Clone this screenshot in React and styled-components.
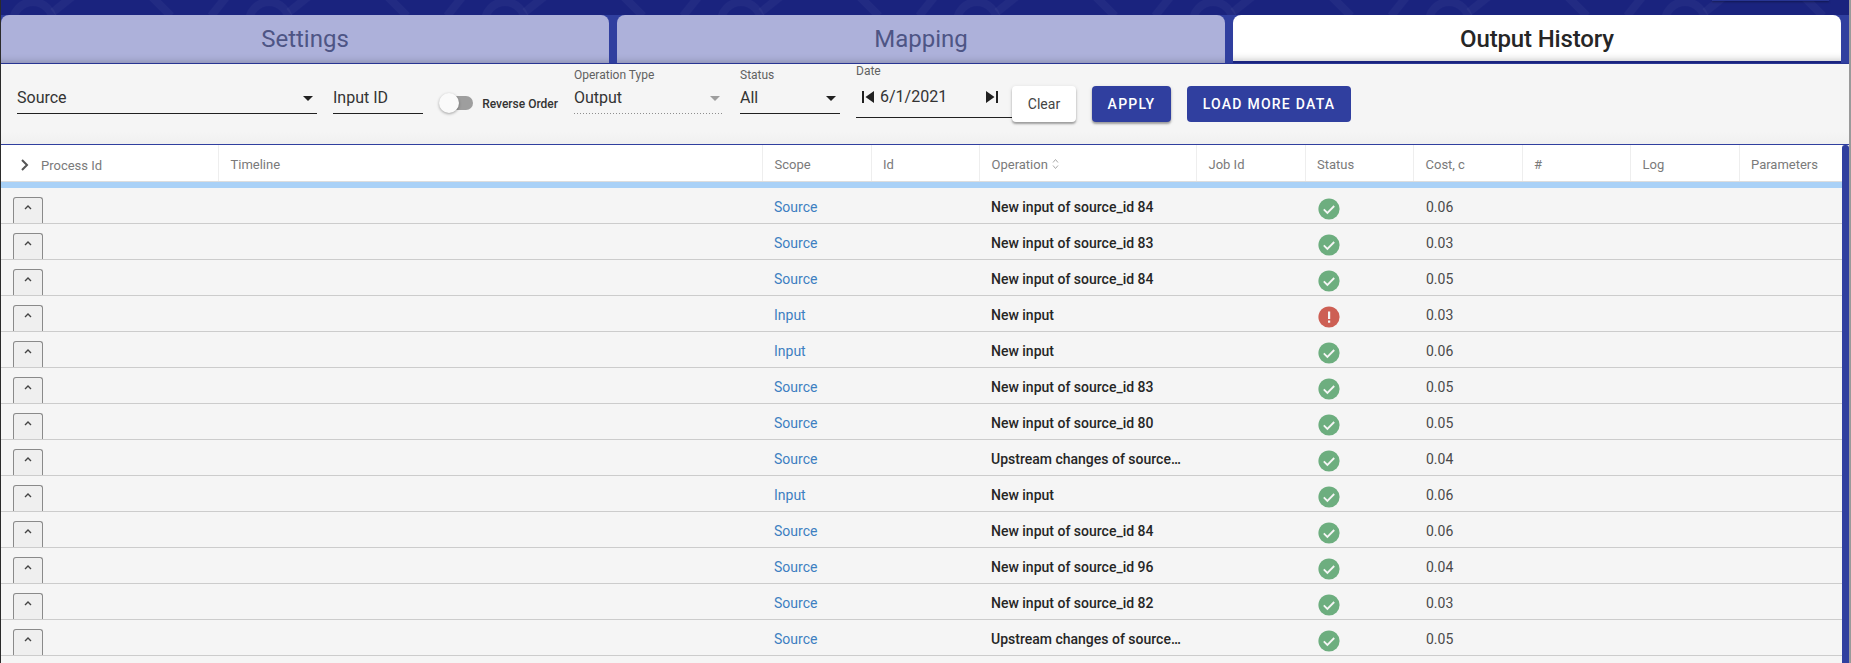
import React from "react";
import styled, { createGlobalStyle } from "styled-components";

const GRID_COLUMNS =
  "217px 544px 108.5px 108.5px 217px 108.5px 108.5px 108.5px 108.5px 108.5px 103.5px";

const GlobalStyle = createGlobalStyle`
  html, body {
    margin: 0;
    height: 663px;
    overflow: hidden;
    background: #f5f5f5;
    font-family: Roboto, "Liberation Sans", sans-serif;
  }
  * {
    box-sizing: border-box;
  }
`;

const Page = styled.div`
  border-left: 1px solid #2b2b2b;
  border-right: 2px solid #9a9a9a;
  display: flex;
  flex-direction: column;
  height: 663px;
  overflow: hidden;
  width: 1851px;
`;

const TopBand = styled.div`
  background: #1a237e;
  display: flex;
  flex: none;
  height: 15px;
  justify-content: flex-end;
  overflow: hidden;
  padding-right: 20px;
  position: relative;
`;

const BandPattern = styled.svg`
  height: 15px;
  left: 0;
  position: absolute;
  top: 0;
  width: 100%;
`;

const BandButton = styled.div`
  background: #283593;
  box-shadow: 0 1px 2px rgba(0, 0, 0, 0.5);
  height: 1px;
  position: relative;
  width: 117px;
`;

const TabRow = styled.div`
  background: #303f9f;
  border-bottom: 1px solid #283593;
  display: flex;
  flex: none;
  gap: 8px;
  height: 49px;
  padding-right: 8px;
`;

const Tab = styled.div`
  align-items: center;
  background: ${props => (props.$active ? "#fff" : "#adb1da")};
  border-bottom: ${props => (props.$active ? "2px solid #1a237e" : "none")};
  border-radius: 8px 8px 0 0;
  box-shadow: inset 0 -8px 8px -8px rgba(0, 0, 0, 0.28);
  color: ${props => (props.$active ? "#262626" : "#4e5585")};
  display: flex;
  flex: 1;
  font-size: 24px;
  font-weight: ${props => (props.$active ? 500 : 400)};
  height: 48px;
  justify-content: center;
  letter-spacing: ${props => (props.$active ? "-0.15px" : "0")};
  padding-top: ${props => (props.$active ? "1px" : "0")};
`;

const FilterBar = styled.div`
  align-items: flex-start;
  background: linear-gradient(#f5f5f5 85%, #f0f0f0);
  border-bottom: 1px solid #303f9f;
  display: flex;
  flex: none;
  gap: 16px;
  height: 81px;
  padding: 4px 0 0 16px;
`;

const Field = styled.div`
  display: flex;
  flex: none;
  flex-direction: column;
  height: ${props => (props.$date ? "54px" : "46px")};
  justify-content: flex-end;
  margin-right: ${props => (props.$date ? "-16px" : "0")};
  margin-top: ${props => (props.$date ? "-4px" : "0")};
  width: ${props => props.$width}px;
`;

const FieldLabel = styled.label`
  color: #616161;
  font-size: 12px;
  height: ${props => (props.$date ? "24px" : "16px")};
  line-height: 14px;
  margin-bottom: auto;
`;

const Control = styled.div`
  align-items: center;
  background-image: ${props =>
    props.$disabled
      ? "linear-gradient(to right, rgba(0, 0, 0, 0.42) 33%, transparent 0%)"
      : "none"};
  background-position: bottom left;
  background-repeat: repeat-x;
  background-size: 3px 1px;
  border-bottom: ${props => (props.$disabled ? "none" : "1px solid #212121")};
  color: #333;
  display: flex;
  font-size: 16px;
  height: ${props => (props.$date ? "33px" : "30px")};
  line-height: 24px;
  padding-bottom: ${props => (props.$date ? "8px" : "2px")};
  padding-right: ${props => (props.$date ? "8px" : "0")};
`;

const ControlText = styled.span`
  flex: 1;
`;

const ControlIcon = styled.svg`
  fill: ${props => props.$color || "#212121"};
  flex: none;
  height: 24px;
  margin-right: ${props => props.$pull || 0}px;
  width: 24px;
`;

const SwitchField = styled.div`
  align-items: center;
  display: flex;
  flex: none;
  gap: 9px;
  margin-top: 26px;
  width: 119px;
`;

const SwitchTrack = styled.div`
  background: #9e9e9e;
  border-radius: 7px;
  height: 14px;
  margin-left: 2px;
  position: relative;
  width: 34px;
`;

const SwitchThumb = styled.div`
  background: #fafafa;
  border-radius: 50%;
  box-shadow: 0 1px 3px rgba(0, 0, 0, 0.35);
  height: 20px;
  left: -2px;
  position: absolute;
  top: -3px;
  width: 20px;
`;

const SwitchLabel = styled.span`
  color: #333;
  font-size: 12px;
  font-weight: 500;
  padding-top: 3px;
  white-space: nowrap;
`;

const ActionButton = styled.button`
  background: ${props => (props.$primary ? "#303f9f" : "#fff")};
  border: none;
  border-radius: 4px;
  box-shadow: ${props =>
    props.$flat ? "none" : "0 2px 2px rgba(0, 0, 0, 0.3), 0 1px 4px rgba(0, 0, 0, 0.12)"};
  color: ${props => (props.$primary ? "#fff" : "#444")};
  flex: none;
  font-family: inherit;
  font-size: 14px;
  font-weight: ${props => (props.$primary ? 500 : 400)};
  height: 36px;
  letter-spacing: ${props => (props.$primary ? "1.25px" : "0")};
  margin-top: 18px;
  padding: 0;
  width: ${props => props.$width}px;
`;

const TableArea = styled.div`
  display: flex;
  flex: 1;
  min-height: 0;
`;

const Table = styled.div`
  flex: 1;
  min-width: 0;
`;

const Scrollbar = styled.div`
  background: #303f9f;
  border-radius: 3px 3px 0 0;
  flex: none;
  width: 7px;
`;

const HeaderRow = styled.div`
  background: #fff;
  border-bottom: 1px solid #ddd;
  display: grid;
  grid-template-columns: ${GRID_COLUMNS};
  height: 37px;
`;

const HeaderCell = styled.div`
  align-items: center;
  border-left: ${props => (props.$first ? "none" : "1px solid #eee")};
  color: #7a7a7a;
  display: flex;
  font-size: 13px;
  gap: ${props => (props.$first ? "11px" : "4px")};
  padding: ${props => (props.$first ? "4px 0 0 19px" : "2px 0 0 11.5px")};
`;

const SelectionStrip = styled.div`
  background: #a9d1f7;
  height: 6px;
`;

const Row = styled.div`
  border-bottom: 1px solid #ccc;
  display: grid;
  grid-template-columns: ${GRID_COLUMNS};
  height: 36px;
  overflow: hidden;
`;

const Cell = styled.div`
  align-items: center;
  color: ${props => props.$color || "#4a4a4a"};
  display: flex;
  font-size: 14px;
  font-weight: ${props => props.$weight || 400};
  padding: 2px 0 0 ${props => props.$inset || 12}px;
  white-space: nowrap;
`;

const ExpandButton = styled.button`
  align-items: center;
  background: #efefef;
  border: 1px solid #8a8a8a;
  border-bottom: none;
  border-radius: 3px 3px 0 0;
  display: flex;
  height: 27px;
  justify-content: center;
  margin: 9px 0 0 12px;
  padding: 0 0 7px;
  width: 30px;
`;

const StatusIcon = styled.svg`
  align-self: flex-start;
  height: 24px;
  margin: 9px 0 0 12px;
  width: 24px;
`;

const rows = [
  ["Source", "New input of source_id 84", "ok", "0.06"],
  ["Source", "New input of source_id 83", "ok", "0.03"],
  ["Source", "New input of source_id 84", "ok", "0.05"],
  ["Input", "New input", "error", "0.03"],
  ["Input", "New input", "ok", "0.06"],
  ["Source", "New input of source_id 83", "ok", "0.05"],
  ["Source", "New input of source_id 80", "ok", "0.05"],
  ["Source", "Upstream changes of source…", "ok", "0.04"],
  ["Input", "New input", "ok", "0.06"],
  ["Source", "New input of source_id 84", "ok", "0.06"],
  ["Source", "New input of source_id 96", "ok", "0.04"],
  ["Source", "New input of source_id 82", "ok", "0.03"],
  ["Source", "Upstream changes of source…", "ok", "0.05"],
];

const headers = ["Timeline", "Scope", "Id", "Operation", "Job Id", "Status", "Cost, c", "#", "Log", "Parameters"];

const ArrowDown = ({ color }) => (
  <ControlIcon viewBox="0 0 24 24" $color={color} $pull={-3}>
    <path d="M7 10l5 5 5-5z" />
  </ControlIcon>
);

const Status = ({ state }) => (
  <StatusIcon viewBox="0 0 24 24">
    {state === "ok" ? (
      <>
        <circle cx="12" cy="12" r="10.6" fill="#6dae7f" />
        <path d="M6.800 12.400l3.600 3.600L17.200 9" fill="none" stroke="#f5f5f5" strokeWidth="1.8" />
      </>
    ) : (
      <>
        <circle cx="12" cy="12" r="10.6" fill="#cd5f54" />
        <path d="M11 6.500h2.200v7.500H11zM11 15.500h2.200v2.200H11z" fill="#f5f5f5" />
      </>
    )}
  </StatusIcon>
);

const App = () => {
  return (
    <Page>
      <GlobalStyle />
      <TopBand>
        <BandPattern>
          <defs>
            <pattern id="band" width="236" height="15" patternUnits="userSpaceOnUse">
              <circle cx="32" cy="22" r="20" fill="none" stroke="#fff" strokeOpacity="0.035" strokeWidth="8" />
              <path d="M52 12L72 -4M150 -4L170 16M210 16L226 -4" stroke="#fff" strokeOpacity="0.035" strokeWidth="8" />
            </pattern>
          </defs>
          <rect width="100%" height="15" fill="url(#band)" />
        </BandPattern>
        <BandButton />
      </TopBand>

      <TabRow>
        <Tab>Settings</Tab>
        <Tab>Mapping</Tab>
        <Tab $active>Output History</Tab>
      </TabRow>

      <FilterBar>
        <Field $width={300}>
          <Control>
            <ControlText>Source</ControlText>
            <ArrowDown />
          </Control>
        </Field>
        <Field $width={90}>
          <Control>
            <ControlText>Input ID</ControlText>
          </Control>
        </Field>
        <SwitchField>
          <SwitchTrack>
            <SwitchThumb />
          </SwitchTrack>
          <SwitchLabel>Reverse Order</SwitchLabel>
        </SwitchField>
        <Field $width={150}>
          <FieldLabel>Operation Type</FieldLabel>
          <Control $disabled>
            <ControlText>Output</ControlText>
            <ArrowDown color="#9e9e9e" />
          </Control>
        </Field>
        <Field $width={100}>
          <FieldLabel>Status</FieldLabel>
          <Control>
            <ControlText>All</ControlText>
            <ArrowDown />
          </Control>
        </Field>
        <Field $width={156} $date>
          <FieldLabel $date>Date</FieldLabel>
          <Control $date>
            <ControlIcon viewBox="0 0 24 24">
              <path d="M6 6h2v12H6zm3.500 6l8.500 6V6z" />
            </ControlIcon>
            <ControlText>6/1/2021</ControlText>
            <ControlIcon viewBox="0 0 24 24">
              <path d="M6 18l8.500-6L6 6v12zM16 6v12h2V6h-2z" />
            </ControlIcon>
          </Control>
        </Field>
        <ActionButton $width={64}>Clear</ActionButton>
        <ActionButton $primary $width={79}>APPLY</ActionButton>
        <ActionButton $primary $flat $width={164}>LOAD MORE DATA</ActionButton>
      </FilterBar>

      <TableArea>
        <Table>
          <HeaderRow>
            <HeaderCell $first>
              <svg width="10" height="14" viewBox="0 0 10 14">
                <path d="M2 2l5 5-5 5" fill="none" stroke="#555" strokeWidth="2" />
              </svg>
              Process Id
            </HeaderCell>
            {headers.map(label => (
              <HeaderCell key={label}>
                {label}
                {label === "Operation" && (
                  <svg width="7" height="12" viewBox="0 0 7 12">
                    <path d="M1 4.500l2.500-3 2.500 3M1 7.500l2.500 3 2.500-3" fill="none" stroke="#aaa" />
                  </svg>
                )}
              </HeaderCell>
            ))}
          </HeaderRow>
          <SelectionStrip />
          {rows.map(([scope, operation, state, cost], index) => (
            <Row key={index}>
              <div>
                <ExpandButton>
                  <svg width="8" height="5" viewBox="0 0 8 5">
                    <path d="M1 4l3-3 3 3" fill="none" stroke="#444" strokeWidth="1.400" />
                  </svg>
                </ExpandButton>
              </div>
              <Cell />
              <Cell $color="#3d7fc1">{scope}</Cell>
              <Cell />
              <Cell $color="#262626" $weight={500}>{operation}</Cell>
              <Cell />
              <Status state={state} />
              <Cell $inset={13}>{cost}</Cell>
              <Cell />
              <Cell />
              <Cell />
            </Row>
          ))}
        </Table>
        <Scrollbar />
      </TableArea>
    </Page>
  );
};

export default App;
